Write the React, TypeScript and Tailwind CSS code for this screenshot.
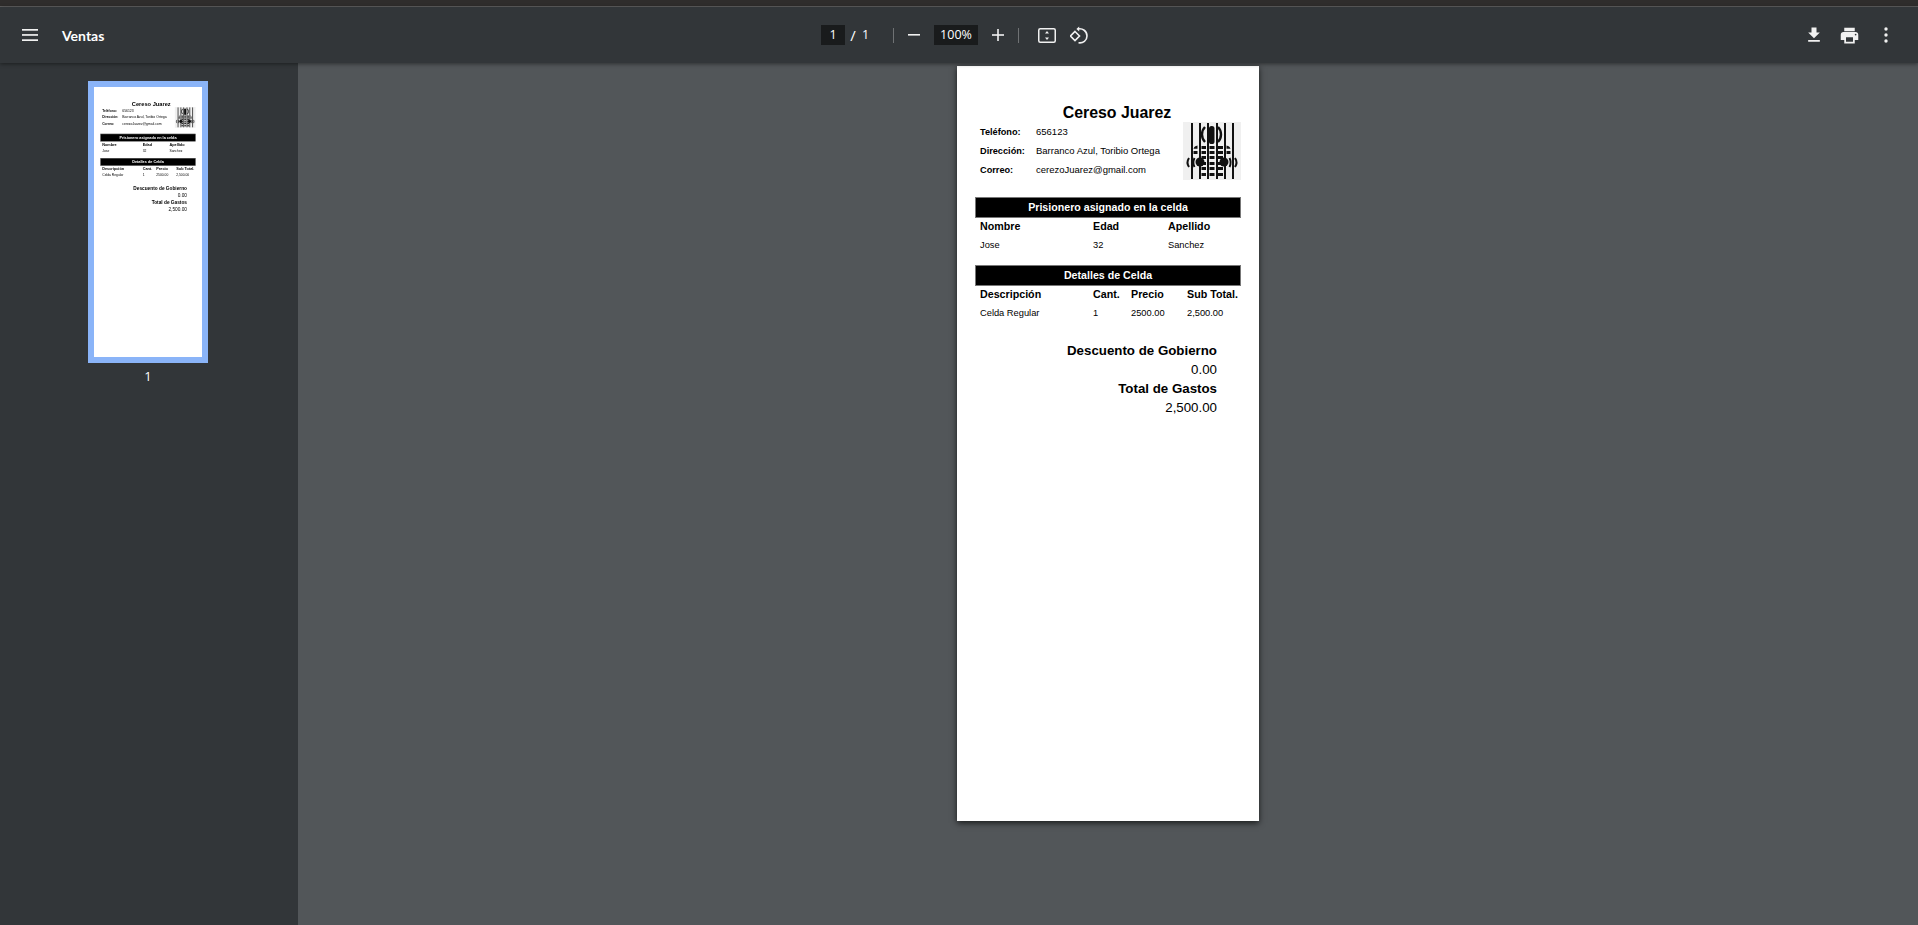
const pageFont = "font-['Liberation_Sans',Arial,sans-serif]";

function PrisonLogo() {
  const bars = [8, 16, 24, 33, 41, 49];
  const rows = [24, 29, 34, 40, 45, 51];
  return (
    <svg width="58" height="58" viewBox="0 0 58 58" className="shrink-0 bg-[#f0f0f0]">
      <path d="M22 5 C18 9 18 16 22 20 M35 5 C39 9 39 16 35 20" fill="none" stroke="#111" strokeWidth="2.4" />
      <rect x="26" y="4" width="5.5" height="18" rx="2.6" fill="#111" />
      {rows.map((y) => (
        <g key={y} fill="#111">
          <rect x="18.5" y={y} width="4.5" height="3" />
          <rect x="26.5" y={y} width="5" height="3" />
          <rect x="35" y={y} width="5" height="3" />
        </g>
      ))}
      <path d="M10.5 26.7 C11 25 12.5 24 14.5 23.6 V26.7 Z M47.5 26.7 C47 25 45.5 24 43.5 23.6 V26.7 Z" fill="#111" />
      <rect x="10.5" y="29" width="4" height="3" fill="#111" />
      <rect x="43.5" y="29" width="4" height="3" fill="#111" />
      <circle cx="17" cy="40" r="4.5" fill="#111" />
      <circle cx="41" cy="40" r="4.5" fill="#111" />
      <path d="M6 36 C4 39 4 42 6 45 M11.5 36 C10 39 10 42 11.5 45 M46.5 36 C48 39 48 42 46.5 45 M52 36 C54 39 54 42 52 45" fill="none" stroke="#111" strokeWidth="2" />
      {bars.map((x) => (
        <rect key={x} x={x} y="1" width="2" height="56" fill="#111" />
      ))}
    </svg>
  );
}

function Bar({ children }: { children: string }) {
  return (
    <div className="h-[21px] border border-[#777] bg-black text-white text-center text-[10.65px] font-bold leading-[19px]">
      {children}
    </div>
  );
}

function Page() {
  const info = [
    ["Teléfono:", "656123"],
    ["Dirección:", "Barranco Azul, Toribio Ortega"],
    ["Correo:", "cerezoJuarez@gmail.com"],
  ];
  return (
    <div className={`w-[302px] h-[755px] bg-white px-[18px] pt-[37px] text-black ${pageFont}`}>
      <h1 className="h-[19px] pl-[18px] text-center text-[15.9px] font-bold leading-[20px]">Cereso Juarez</h1>
      <div className="flex justify-between">
        <div className="pt-px">
          {info.map(([label, value]) => (
            <div key={label} className="flex h-[19px] items-center pl-[5px] text-[9.5px]">
              <span className="w-[56px] text-[9.2px] font-bold">{label}</span>
              <span>{value}</span>
            </div>
          ))}
        </div>
        <PrisonLogo />
      </div>

      <div className="mt-[17px]">
        <Bar>Prisionero asignado en la celda</Bar>
      </div>
      <div className="grid grid-cols-[113px_75px_1fr] pl-[5px] pb-[2px] text-[10.7px] font-bold h-[18px] items-center">
        <span>Nombre</span>
        <span>Edad</span>
        <span>Apellido</span>
      </div>
      <div className="grid grid-cols-[113px_75px_1fr] pl-[5px] text-[9.3px] h-[19px] items-center">
        <span>Jose</span>
        <span>32</span>
        <span>Sanchez</span>
      </div>

      <div className="mt-[10px]">
        <Bar>Detalles de Celda</Bar>
      </div>
      <div className="grid grid-cols-[113px_38px_56px_1fr] pl-[5px] pb-[2px] text-[10.7px] font-bold h-[18px] items-center whitespace-nowrap">
        <span>Descripción</span>
        <span>Cant.</span>
        <span>Precio</span>
        <span>Sub Total.</span>
      </div>
      <div className="grid grid-cols-[113px_38px_56px_1fr] pl-[5px] text-[9.3px] h-[19px] items-center">
        <span>Celda Regular</span>
        <span>1</span>
        <span>2500.00</span>
        <span>2,500.00</span>
      </div>

      <div className="mt-[18px] pr-[24px] text-right text-[13.3px] leading-[19px]">
        <div className="font-bold">Descuento de Gobierno</div>
        <div>0.00</div>
        <div className="font-bold">Total de Gastos</div>
        <div>2,500.00</div>
      </div>
    </div>
  );
}

function Separator() {
  return <div className="h-[15px] w-px bg-[#6f7274]" />;
}

function Toolbar() {
  return (
    <div className="relative z-10 flex h-[56px] items-center bg-[#323639] text-white shadow-[0_1px_4px_rgba(0,0,0,0.45)] font-['Open_Sans',sans-serif]">
      <div className="flex w-[821px] items-center">
        <svg width="16" height="12" viewBox="0 0 16 12" fill="#f1f1f1" className="ml-[22px]">
          <rect width="16" height="1.7" />
          <rect y="5.1" width="16" height="1.7" />
          <rect y="10.3" width="16" height="1.7" />
        </svg>
        <span className="ml-[24px] text-[14px] font-bold font-['Lato',sans-serif]">Ventas</span>
      </div>

      <div className="flex items-center">
        <div className="flex h-[20px] w-[24px] items-center justify-center bg-[#191b1c] text-[12.5px]">1</div>
        <span className="ml-[5px] w-[6px] text-center text-[15px]">/</span>
        <span className="ml-[6px] w-[7px] text-center text-[12.5px]">1</span>
        <div className="ml-[24px]"><Separator /></div>
        <svg width="12" height="2" viewBox="0 0 12 2" fill="#f1f1f1" className="ml-[14px]">
          <rect width="12" height="1.6" />
        </svg>
        <div className="ml-[14px] flex h-[20px] w-[44px] items-center justify-center bg-[#191b1c] text-[12.5px]">100%</div>
        <svg width="12" height="12" viewBox="0 0 12 12" fill="#f1f1f1" className="ml-[14px]">
          <rect y="5.2" width="12" height="1.6" />
          <rect x="5.2" width="1.6" height="12" />
        </svg>
        <div className="ml-[14px]"><Separator /></div>
        <svg width="18" height="15" viewBox="0 0 18 15" className="ml-[19px]">
          <rect x="0.75" y="0.75" width="16.5" height="13.5" rx="1.5" fill="none" stroke="#f1f1f1" strokeWidth="1.5" />
          <path d="M9 3 L11 5.4 H7 Z M9 12 L11 9.6 H7 Z" fill="#f1f1f1" />
        </svg>
        <svg width="18" height="18" viewBox="0 0 18 18" fill="none" stroke="#f1f1f1" strokeWidth="1.6" className="ml-[14px]">
          <path d="M5 5.5 L9.5 10 L5 14.5 L0.5 10 Z" />
          <path d="M8 3 C12.5 2 17 5 17 10 C17 14.5 13 17.5 8.5 16.8" />
          <path d="M9.2 0.6 L6.4 3 L9.2 5.4" fill="#f1f1f1" stroke="none" />
        </svg>
      </div>

      <div className="ml-auto flex items-center">
        <svg width="20" height="20" viewBox="0 0 24 24" fill="#f1f1f1">
          <path d="M19 9h-4V3H9v6H5l7 7 7-7zM5 18v2h14v-2H5z" />
        </svg>
        <svg width="21" height="21" viewBox="0 0 24 24" fill="#f1f1f1" className="ml-[15px]">
          <path d="M19 8H5c-1.66 0-3 1.34-3 3v6h4v4h12v-4h4v-6c0-1.66-1.34-3-3-3zm-3 11H8v-5h8v5zm3-7c-.55 0-1-.45-1-1s.45-1 1-1 1 .45 1 1-.45 1-1 1zm-1-9H6v4h12V3z" />
        </svg>
        <svg width="4" height="16" viewBox="0 0 4 16" fill="#f1f1f1" className="ml-[24px] mr-[30px]">
          <circle cx="2" cy="2" r="1.7" />
          <circle cx="2" cy="8" r="1.7" />
          <circle cx="2" cy="14" r="1.7" />
        </svg>
      </div>
    </div>
  );
}

function Thumbnail() {
  return (
    <div className="mt-[18px] flex flex-col items-center pr-[2px]">
      <div className="h-[282px] w-[120px] overflow-hidden border-[6px] border-[#8ab4f8] bg-white">
        <div className="origin-top-left scale-[0.3576] blur-[1px]">
          <Page />
        </div>
      </div>
      <span className="mt-[4px] text-[13px] text-white font-['Open_Sans',sans-serif]">1</span>
    </div>
  );
}

export default function App() {
  return (
    <div className="flex h-[925px] w-[1918px] flex-col overflow-hidden bg-[#525659]">
      <div className="h-[6px] bg-[#2f2d2c]" />
      <div className="h-px bg-[#5f5f5f]" />
      <Toolbar />
      <div className="flex min-h-0 flex-1">
        <aside className="w-[298px] shrink-0 bg-[#323639]">
          <Thumbnail />
        </aside>
        <main className="flex flex-1 justify-center pt-[3px]">
          <div className="h-fit shadow-[0_2px_6px_rgba(0,0,0,0.7)]">
            <Page />
          </div>
        </main>
      </div>
    </div>
  );
}
